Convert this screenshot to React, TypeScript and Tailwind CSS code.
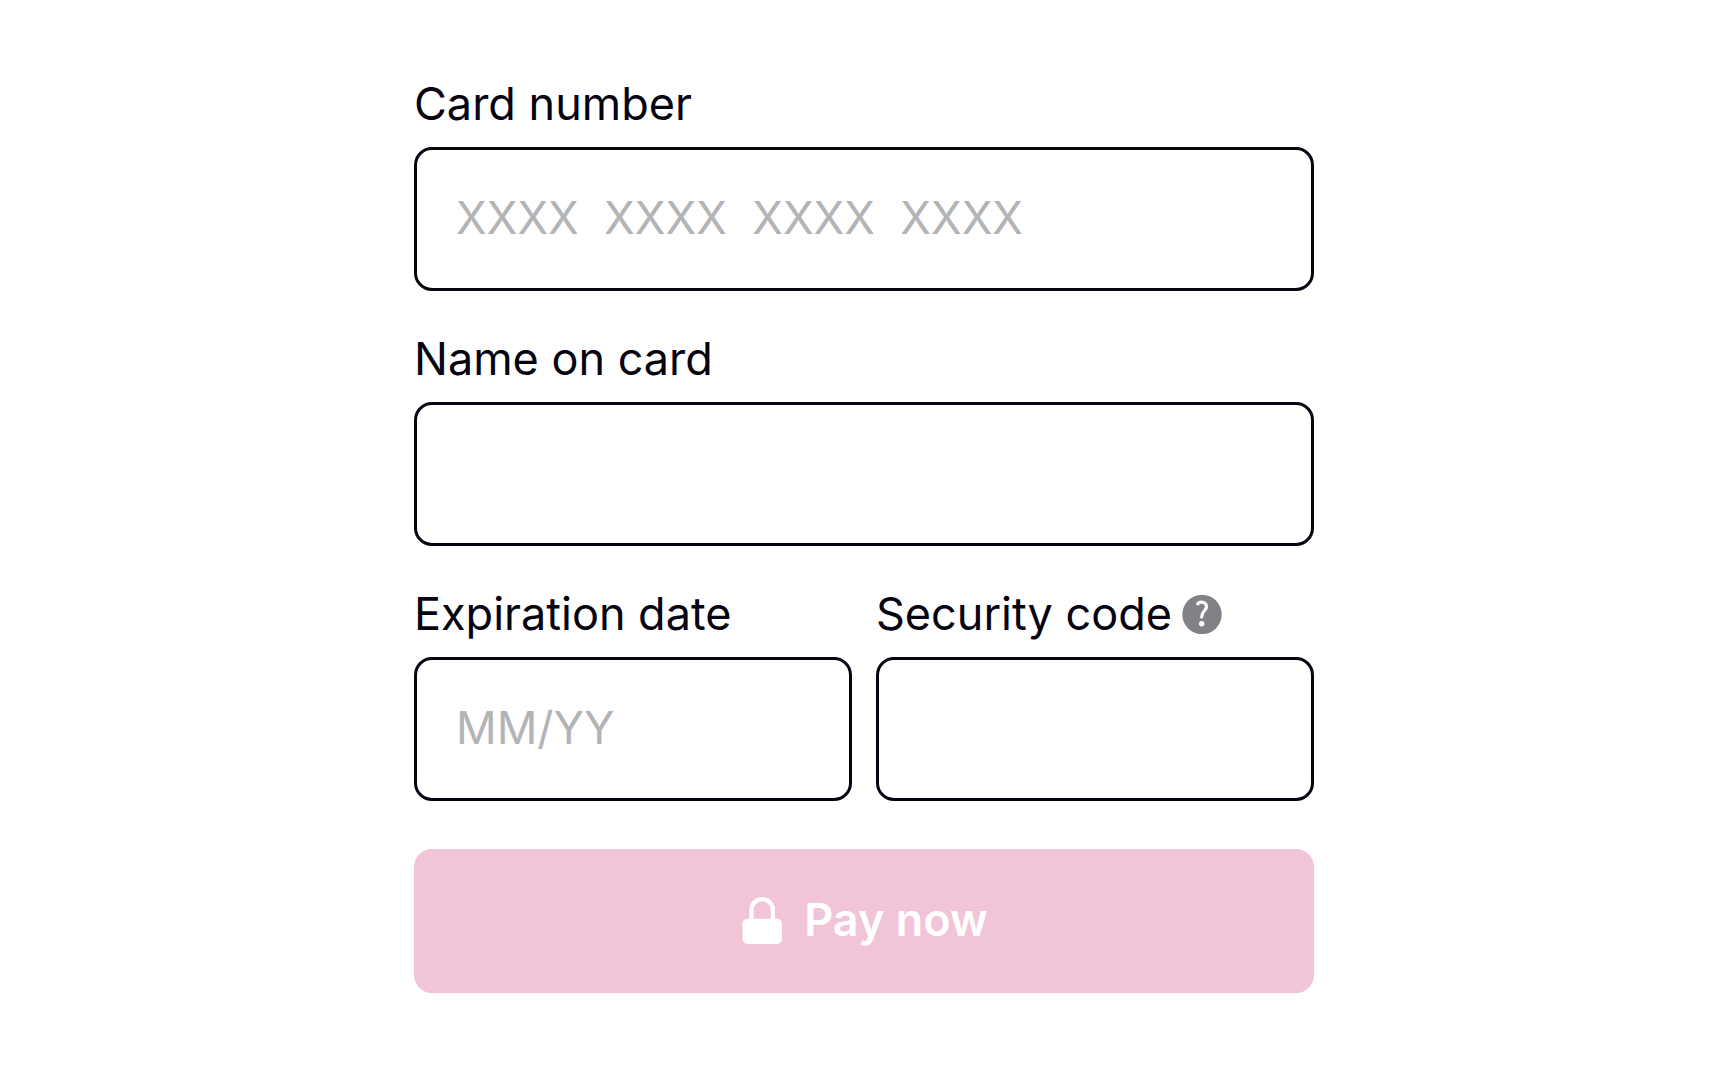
import React from "react";
import type { ComponentProps, ReactNode } from "react";

type FieldProps = ComponentProps<"input"> & {
  id: string;
  label: string;
  hint?: ReactNode;
};

function Field({ id, label, hint, ...inputProps }: FieldProps) {
  return (
    <div className="flex flex-col gap-4">
      <div className="flex items-center gap-2.5">
        <label htmlFor={id} className="text-[45px] leading-[54px] text-[#050410]">
          {label}
        </label>
        {hint}
      </div>
      <input
        id={id}
        type="text"
        className="h-36 w-full rounded-[18px] border-3 border-[#050410] bg-white px-[39px] pb-1 text-[45px] text-[#050410] placeholder:text-[#b3b4b6]"
        {...inputProps}
      />
    </div>
  );
}

function HelpIcon() {
  return (
    <svg viewBox="0 0 40 40" className="size-10" aria-hidden="true">
      <circle cx="20" cy="20.5" r="19.7" fill="#828187" />
      <path
        d="M15.7 9.9C17.2 8.2 19 7.9 20.6 8.2C23.2 8.7 24.9 10.8 24.4 13.4C23.9 16.4 19.8 17.4 19.6 23"
        fill="none"
        stroke="#fff"
        strokeWidth="3.2"
        strokeLinecap="round"
      />
      <circle cx="19.7" cy="29.8" r="2.7" fill="#fff" />
    </svg>
  );
}

function LockIcon() {
  return (
    <svg viewBox="0 0 40 48" className="h-12 w-10" aria-hidden="true">
      <rect x="0.5" y="22.7" width="39.5" height="25.3" rx="5" fill="#fff" />
      <path d="M9.5 24V13.9a10.7 10.7 0 0 1 21.4 0V24" fill="none" stroke="#fff" strokeWidth="4.3" />
    </svg>
  );
}

export default function App() {
  return (
    <main className="min-h-screen bg-white px-6 pt-[77px] pb-20 font-['Inter',sans-serif]">
      <form className="mx-auto flex max-w-[900px] flex-col gap-12">
        <div className="flex flex-col gap-[41px]">
          <Field id="card-number" label="Card number" placeholder="XXXX  XXXX  XXXX  XXXX" inputMode="numeric" />
          <Field id="card-name" label="Name on card" />
          <div className="grid grid-cols-2 gap-6">
            <Field id="expiration" label="Expiration date" placeholder="MM/YY" />
            <Field
              id="security-code"
              label="Security code"
              hint={
                <button type="button" aria-label="What is a security code?">
                  <HelpIcon />
                </button>
              }
            />
          </div>
        </div>
        <button
          type="button"
          className="flex h-36 w-full items-center justify-center gap-[22px] rounded-[18px] bg-[#f1c4d8] pb-0.5 pl-0.5 text-[45px] font-semibold text-white"
        >
          <LockIcon />
          Pay now
        </button>
      </form>
    </main>
  );
}
